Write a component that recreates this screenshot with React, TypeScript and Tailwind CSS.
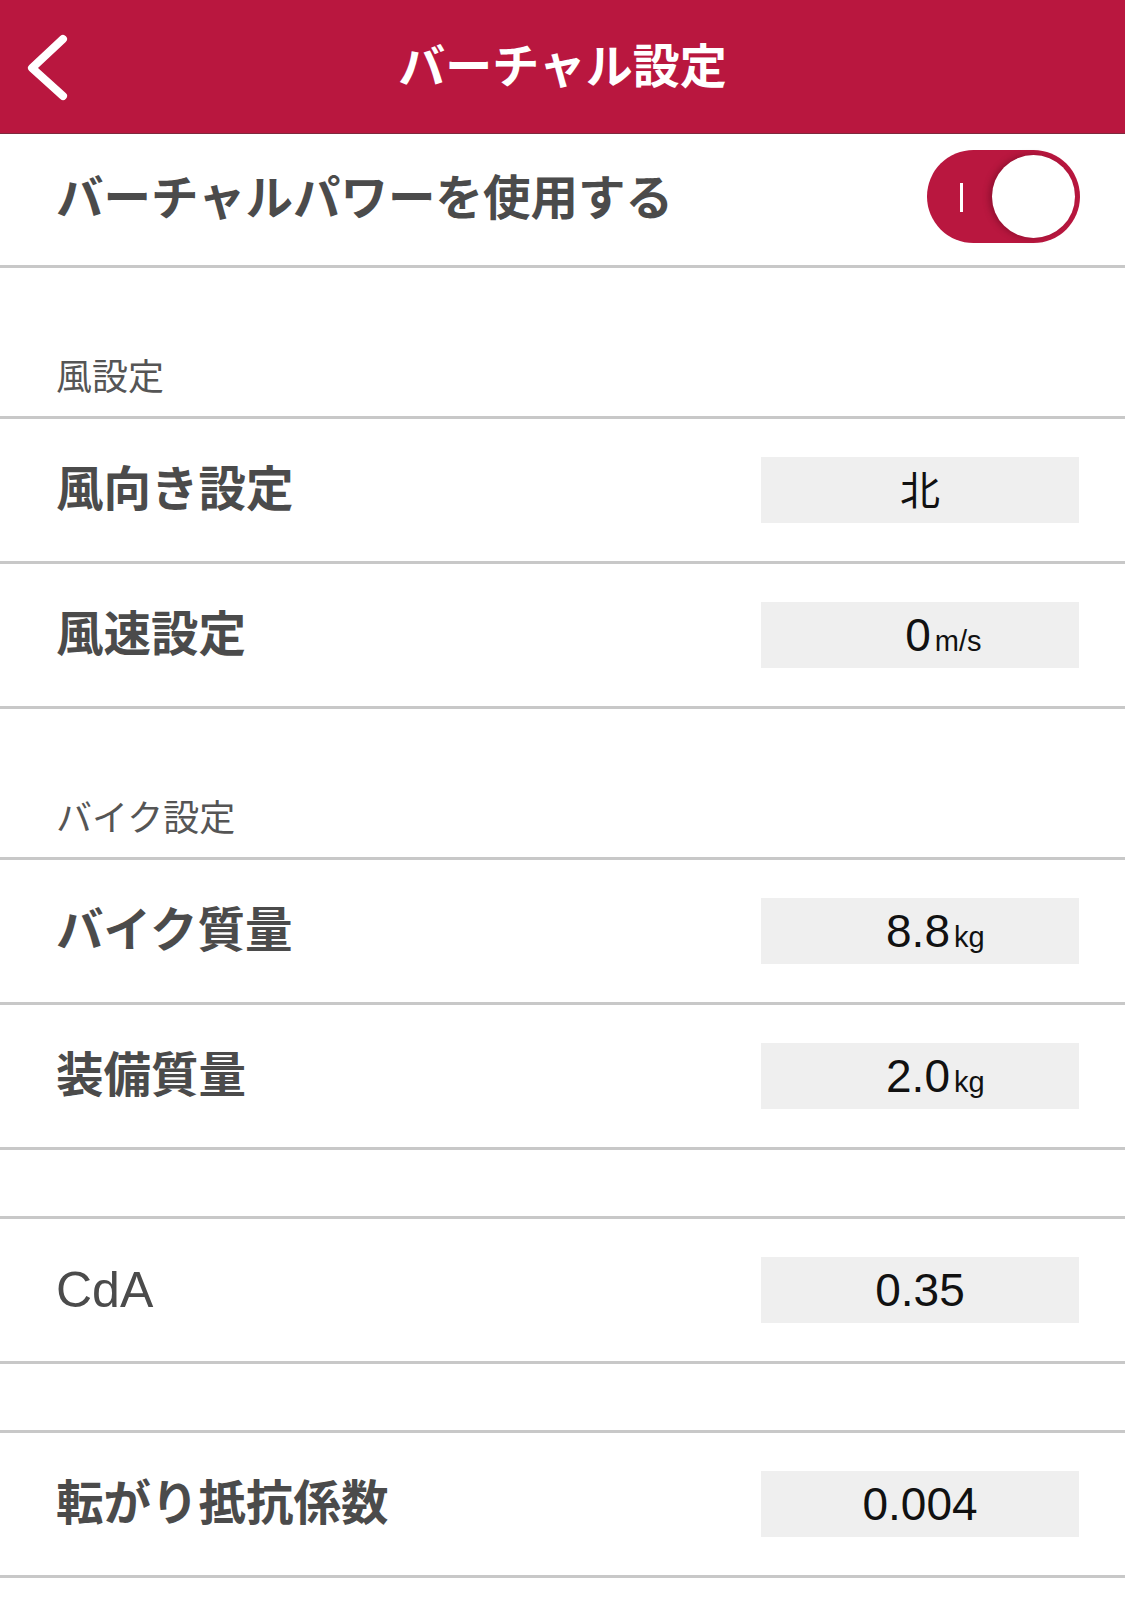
import { useState } from "react";

type Row =
  | { kind: "section"; label: string }
  | { kind: "gap" }
  | {
      kind: "field";
      label: string;
      value: string;
      unit?: string;
      latin?: boolean;
      cjkValue?: boolean;
    };

const rows: Row[] = [
  { kind: "section", label: "風設定" },
  { kind: "field", label: "風向き設定", value: "北", cjkValue: true },
  { kind: "field", label: "風速設定", value: "0", unit: "m/s" },
  { kind: "section", label: "バイク設定" },
  { kind: "field", label: "バイク質量", value: "8.8", unit: "kg" },
  { kind: "field", label: "装備質量", value: "2.0", unit: "kg" },
  { kind: "gap" },
  { kind: "field", label: "CdA", value: "0.35", latin: true },
  { kind: "gap" },
  { kind: "field", label: "転がり抵抗係数", value: "0.004" },
];

const Toggle = ({ on, onChange }: { on: boolean; onChange: (v: boolean) => void }) => (
  <button
    onClick={() => onChange(!on)}
    className={`relative mb-[6px] h-[93px] w-[153px] shrink-0 rounded-full transition-colors ${
      on ? "bg-[#b9173f]" : "bg-[#d9d9d9]"
    }`}
  >
    {on && <span className="absolute left-[33px] top-[33px] h-[29px] w-[3px] bg-white" />}
    <span
      className={`absolute top-[5px] size-[83px] rounded-full bg-white shadow-[-3px_0_6px_rgba(70,0,20,0.35)] ${
        on ? "right-[5px]" : "left-[5px]"
      }`}
    />
  </button>
);

const ValueBox = ({ value, unit, cjk }: { value: string; unit?: string; cjk?: boolean }) => (
  <div className="flex h-[66px] w-[318px] items-center justify-center bg-[#efefef] text-[#111]">
    {cjk ? (
      <span className="mb-[4px] text-[40px] leading-none font-normal">{value}</span>
    ) : (
      <span className="font-['Liberation_Sans',Arial,sans-serif] text-[46px] leading-none">
        {value}
        {unit && (
          <span className="ml-[4px] inline-block w-0 whitespace-nowrap text-[29px]">{unit}</span>
        )}
      </span>
    )}
  </div>
);

export default function App() {
  const [useVirtual, setUseVirtual] = useState(true);

  return (
    <div className="min-h-[1617px] bg-white font-['Noto_Sans_CJK_JP','Noto_Sans',sans-serif]">
      <header className="grid h-[134px] grid-cols-[1fr_auto_1fr] items-center border-b border-[#7d2a3e] bg-[#b9173f]">
        <button className="ml-[25px] flex h-[72px] w-[48px] items-center">
          <svg width="44" height="72" viewBox="0 0 44 72" fill="none">
            <path
              d="M38 8 L7 37 L38 65"
              stroke="white"
              strokeWidth="8"
              strokeLinecap="round"
              strokeLinejoin="round"
            />
          </svg>
        </button>
        <h1 className="mb-[8px] text-[47px] leading-none font-bold text-white">バーチャル設定</h1>
        <div />
      </header>

      <div className="flex h-[134px] items-center justify-between border-b-[3px] border-[#c8c8c8] pr-[45px] pl-[56px]">
        <span className="mb-[10px] text-[47.5px] leading-none font-bold text-[#4b4b4b]">
          バーチャルパワーを使用する
        </span>
        <Toggle on={useVirtual} onChange={setUseVirtual} />
      </div>

      {rows.map((row, i) => {
        if (row.kind === "section") {
          return (
            <div
              key={i}
              className="flex h-[151px] items-end border-b-[3px] border-[#c8c8c8] pb-[21px] pl-[56px]"
            >
              <span className="text-[36px] leading-[42px] font-normal text-[#555]">{row.label}</span>
            </div>
          );
        }
        if (row.kind === "gap") {
          return <div key={i} className="h-[69px] border-b-[3px] border-[#c8c8c8]" />;
        }
        return (
          <div
            key={i}
            className="flex h-[145px] items-center justify-between border-b-[3px] border-[#c8c8c8] pr-[46px] pl-[56px]"
          >
            {row.latin ? (
              <span className="font-['Liberation_Sans',Arial,sans-serif] text-[50px] leading-none text-[#4b4b4b]">
                {row.label}
              </span>
            ) : (
              <span className="mb-[8px] text-[47.5px] leading-none font-bold text-[#4b4b4b]">
                {row.label}
              </span>
            )}
            <ValueBox value={row.value} unit={row.unit} cjk={row.cjkValue} />
          </div>
        );
      })}
    </div>
  );
}
